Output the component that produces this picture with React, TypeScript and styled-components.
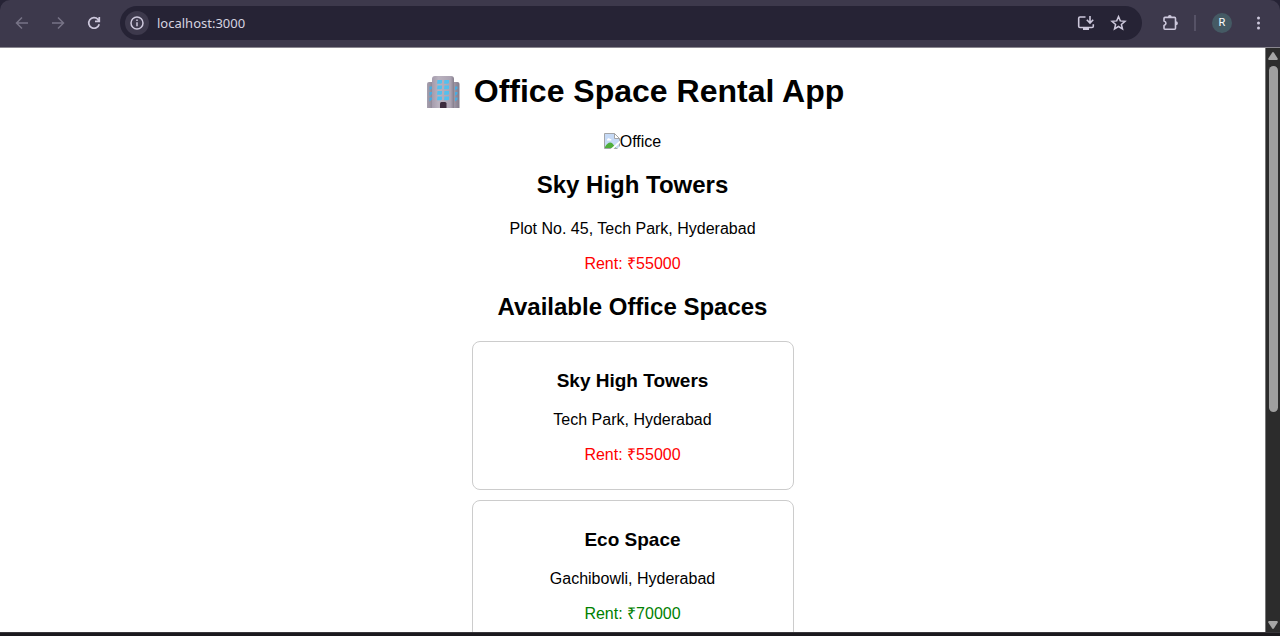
import React from "react";
import styled, { createGlobalStyle } from "styled-components";

const GlobalStyle = createGlobalStyle`
  *, *::before, *::after { box-sizing: border-box; }
  html, body { margin: 0; padding: 0; background: #1b191d; }
  body { font-family: Arial, "Liberation Sans", sans-serif; font-size: 16px; color: #000; }
`;

const Window = styled.div`
  display: flex;
  flex-direction: column;
  height: 100vh;
  overflow: hidden;
  background: #262335;
`;

const Toolbar = styled.header`
  display: flex;
  align-items: center;
  flex: none;
  height: 48px;
  padding: 0 10px 1px 10px;
  background: #3d394c;
  border-bottom: 1px solid #8a8790;
  border-radius: 10px 10px 0 0;
`;

const IconButton = styled.button<{ $dim?: boolean }>`
  display: grid;
  place-items: center;
  flex: none;
  width: 24px;
  height: 24px;
  padding: 0;
  border: 0;
  background: none;
  color: ${(p) => (p.$dim ? "#777386" : "#cdc8dc")};
`;

const NavGroup = styled.nav`
  display: flex;
  gap: 12px;
  margin-right: 14px;
`;

const AddressBar = styled.form`
  display: flex;
  align-items: center;
  flex: 1;
  min-width: 0;
  height: 34px;
  padding: 0 12px 0 5px;
  gap: 8px;
  border-radius: 17px;
  background: #262335;
`;

const SiteInfo = styled(IconButton)`
  border-radius: 50%;
  background: #3d394c;
`;

const Address = styled.input`
  flex: 1;
  min-width: 0;
  padding: 0;
  border: 0;
  outline: 0;
  background: none;
  color: #d6d3e0;
  font: 13px/20px "Noto Sans", "Open Sans", sans-serif;
`;

const Actions = styled.div`
  display: flex;
  align-items: center;
  gap: 8px;
  margin-left: 16px;
`;

const Divider = styled.span`
  width: 2px;
  height: 16px;
  margin-left: 4px;
  background: #565266;
`;

const Avatar = styled.button`
  width: 20px;
  height: 20px;
  margin: 0 6px 0 8px;
  padding: 0;
  border: 0;
  border-radius: 50%;
  background: #455a64;
  color: #fff;
  font: 11px/20px Roboto, sans-serif;
`;

const Viewport = styled.div`
  display: flex;
  flex: 1;
  min-height: 0;
`;

const Page = styled.main`
  flex: 1;
  min-width: 0;
  overflow: hidden;
  background: #fff;
  text-align: center;
`;

const Title = styled.h1`
  display: flex;
  justify-content: center;
  align-items: center;
  gap: 14px;
  margin: 22px 0 20px;
  padding-left: 6px;
  font-size: 32px;
  line-height: 43px;
`;

const MissingImage = styled.div`
  display: flex;
  justify-content: center;
  align-items: flex-start;
  line-height: 18px;
`;

const Heading = styled.h2`
  margin: 20px 0;
  font-size: 24px;
  line-height: 28px;
`;

const Text = styled.p<{ $color?: string }>`
  margin: 16px 0;
  line-height: 19px;
  color: ${(p) => p.$color ?? "inherit"};
`;

const Card = styled.article`
  width: 322px;
  max-width: 100%;
  margin: 10px auto;
  padding: 10px 10px 9px;
  border: 1px solid #ccc;
  border-radius: 8px;
`;

const CardTitle = styled.h3`
  margin: 18px 0;
  font-size: 19px;
  line-height: 22px;
`;

const ScrollTrack = styled.div`
  display: flex;
  flex-direction: column;
  align-items: center;
  flex: none;
  width: 15px;
  padding: 4px 0 3px;
  background: #2c2c2c;
  border-left: 1px solid #777;
`;

const ScrollLane = styled.div`
  flex: 1;
  width: 9px;
  margin: 6px 0;
`;

const ScrollThumb = styled.div`
  height: 63%;
  border-radius: 5px;
  background: #9f9f9f;
`;

const BottomEdge = styled.footer`
  flex: none;
  height: 4px;
  background: #1b191d;
  border-top: 1px solid #39373b;
`;

const stroke = { fill: "none", stroke: "currentColor", strokeWidth: 1.5 };

const BackIcon = () => (
  <svg width="16" height="16" viewBox="0 0 16 16" {...stroke} aria-hidden="true">
    <path d="M14 8H3M8 2.5 2.5 8 8 13.5" />
  </svg>
);

const ForwardIcon = () => (
  <svg width="16" height="16" viewBox="0 0 16 16" {...stroke} aria-hidden="true">
    <path d="M2 8h11M8 2.5 13.5 8 8 13.5" />
  </svg>
);

const ReloadIcon = () => (
  <svg width="16" height="16" viewBox="0 0 16 16" {...stroke} strokeWidth={1.7} aria-hidden="true">
    <path d="M13.2 9.2A5.3 5.3 0 1 1 12 4.4L13 5.6M13.3 2v4.3H9" />
  </svg>
);

const InfoIcon = () => (
  <svg width="16" height="16" viewBox="0 0 16 16" {...stroke} aria-hidden="true">
    <circle cx="8" cy="8" r="6" />
    <path d="M8 7.2v4M8 4.5v1.6" />
  </svg>
);

const InstallIcon = () => (
  <svg width="18" height="18" viewBox="0 0 18 18" {...stroke} strokeWidth={1.6} aria-hidden="true">
    <path d="M8.5 3H3a1.3 1.3 0 0 0-1.3 1.3v7.9a1.3 1.3 0 0 0 1.3 1.3h12a1.3 1.3 0 0 0 1.3-1.3v-2" />
    <path d="M13 2v6.5M9.8 5.8 13 9l3.2-3.2" />
    <path d="M6 14h6v2H6z" fill="currentColor" stroke="none" />
  </svg>
);

const StarIcon = () => (
  <svg width="18" height="18" viewBox="0 0 18 18" {...stroke} aria-hidden="true">
    <path d="m9.500 2.600 1.800 4.300 4.700.4-3.600 3.100 1.100 4.600-4-2.500L5.500 15l1.100-4.600L3 7.300l4.700-.4z" />
  </svg>
);

const ExtensionsIcon = () => (
  <svg width="18" height="18" viewBox="0 0 18 18" {...stroke} strokeWidth={1.6} aria-hidden="true">
    <path
      d="M4 3.400h9.500a1 1 0 0 1 1 1v9.800a1 1 0 0 1-1 1H4a1 1 0 0 1-1-1v-2.700c2.600-.9 2.600-3.500 0-4.400V4.400a1 1 0 0 1 1-1z"
      strokeLinejoin="round"
    />
    <path d="M6.900 3a1.900 1.900 0 0 1 3.800 0zM14.900 7.300a2 2 0 0 1 0 4z" fill="currentColor" stroke="none" />
  </svg>
);

const MenuIcon = () => (
  <svg width="16" height="16" viewBox="0 0 16 16" fill="currentColor" aria-hidden="true">
    <circle cx="8.500" cy="3" r="1.500" />
    <circle cx="8.500" cy="8" r="1.500" />
    <circle cx="8.500" cy="13" r="1.500" />
  </svg>
);

const BuildingIcon = () => (
  <svg width="33" height="32" viewBox="0 0 33 32" aria-hidden="true">
    <defs>
      <linearGradient id="side" x1="0" x2="1">
        <stop offset="0" stopColor="#a8a1b0" />
        <stop offset="1" stopColor="#817b8a" />
      </linearGradient>
      <linearGradient id="front" x1="0" x2="1">
        <stop offset="0" stopColor="#a49bac" />
        <stop offset=".3" stopColor="#b9b2bf" />
        <stop offset=".85" stopColor="#aba3b2" />
        <stop offset="1" stopColor="#857e8c" />
      </linearGradient>
    </defs>
    <path d="M0 32V8a2 2 0 0 1 2-2h6v26z" fill="url(#side)" />
    <path d="M25 6h5.500a2 2 0 0 1 2 2v24H25z" fill="url(#side)" />
    <path d="M5 32V3c0-2 1-3 3-3h16c2 0 3 1 3 3v29z" fill="url(#front)" />
    {[4, 9.5, 15, 20.5].map((y) => (
      <g key={y} fill="#52c0ee">
        <path d={`M10.500 ${y}h4.500v3l-1 .8h-4zM17.500 ${y}h4.500v3l-1 .8h-4z`} />
      </g>
    ))}
    {[10.5, 16, 21.5].map((y) => (
      <g key={y} fill="#48ace0">
        <path d={`M2.500 ${y}h2.500v2l-2.500 2zM28 ${y}h2.500v2l-2.500 2z`} />
      </g>
    ))}
    <path d="M13 32v-4.500a1.500 1.500 0 0 1 1.500-1.500h3.500a1.500 1.500 0 0 1 1.500 1.500V32z" fill="#3b2b3d" />
  </svg>
);

const BrokenImageIcon = () => (
  <svg width="16" height="16" viewBox="0 0 16 16" aria-hidden="true">
    <path d="M.5.5h10l5 5v10H.5z" fill="#c6daf6" stroke="#a3a5a8" />
    <path d="M3 7c0-2 2.500-2.500 3-1 1.500-.5 2 1 1 1.500H3z" fill="#fff" />
    <path d="M1 15v-1c2-4 5-5.500 7-4l4 5z" fill="#4fae3c" />
    <path d="M10.500.5v5h5z" fill="#fff" stroke="#a3a5a8" />
    <path d="m6.500 16 9.500-8.500V10l-6.500 6z" fill="#fff" />
    <path d="M13 16h3v-3z" fill="#fff" />
  </svg>
);

const ArrowUp = () => (
  <svg width="10" height="8" viewBox="0 0 10 8" fill="#a5a5a5" aria-hidden="true">
    <path d="M4 .8a1.200 1.200 0 0 1 2 0L9.700 6.500Q10 8 9 8H1Q0 8 .3 6.500z" />
  </svg>
);

const ArrowDown = () => (
  <svg width="10" height="8" viewBox="0 0 10 8" fill="#a5a5a5" aria-hidden="true">
    <path d="M4 7.200a1.200 1.200 0 0 0 2 0L9.700 1.500Q10 0 9 0H1Q0 0 .3 1.500z" />
  </svg>
);

const offices = [
  { name: "Sky High Towers", place: "Tech Park, Hyderabad", rent: 55000 },
  { name: "Eco Space", place: "Gachibowli, Hyderabad", rent: 70000 },
];

const rentColor = (rent: number) => (rent < 60000 ? "#f00" : "#008000");

const Rent = ({ amount }: { amount: number }) => (
  <Text $color={rentColor(amount)}>Rent: ₹{amount}</Text>
);

export default function App() {
  return (
    <>
      <GlobalStyle />
      <Window>
        <Toolbar>
          <NavGroup>
            <IconButton $dim aria-label="Back"><BackIcon /></IconButton>
            <IconButton $dim aria-label="Forward"><ForwardIcon /></IconButton>
            <IconButton aria-label="Reload"><ReloadIcon /></IconButton>
          </NavGroup>
          <AddressBar onSubmit={(e) => e.preventDefault()}>
            <SiteInfo type="button" aria-label="Site information"><InfoIcon /></SiteInfo>
            <Address aria-label="Address" defaultValue="localhost:3000" />
            <IconButton type="button" aria-label="Install app"><InstallIcon /></IconButton>
            <IconButton type="button" aria-label="Bookmark"><StarIcon /></IconButton>
          </AddressBar>
          <Actions>
            <IconButton aria-label="Extensions"><ExtensionsIcon /></IconButton>
            <Divider />
            <Avatar aria-label="Profile R">R</Avatar>
            <IconButton aria-label="Menu"><MenuIcon /></IconButton>
          </Actions>
        </Toolbar>
        <Viewport>
          <Page>
            <Title><BuildingIcon />Office Space Rental App</Title>
            <MissingImage><BrokenImageIcon />Office</MissingImage>
            <Heading>Sky High Towers</Heading>
            <Text>Plot No. 45, Tech Park, Hyderabad</Text>
            <Rent amount={55000} />
            <Heading>Available Office Spaces</Heading>
            {offices.map((o) => (
              <Card key={o.name}>
                <CardTitle>{o.name}</CardTitle>
                <Text>{o.place}</Text>
                <Rent amount={o.rent} />
              </Card>
            ))}
          </Page>
          <ScrollTrack>
            <ArrowUp />
            <ScrollLane><ScrollThumb /></ScrollLane>
            <ArrowDown />
          </ScrollTrack>
        </Viewport>
        <BottomEdge />
      </Window>
    </>
  );
}
